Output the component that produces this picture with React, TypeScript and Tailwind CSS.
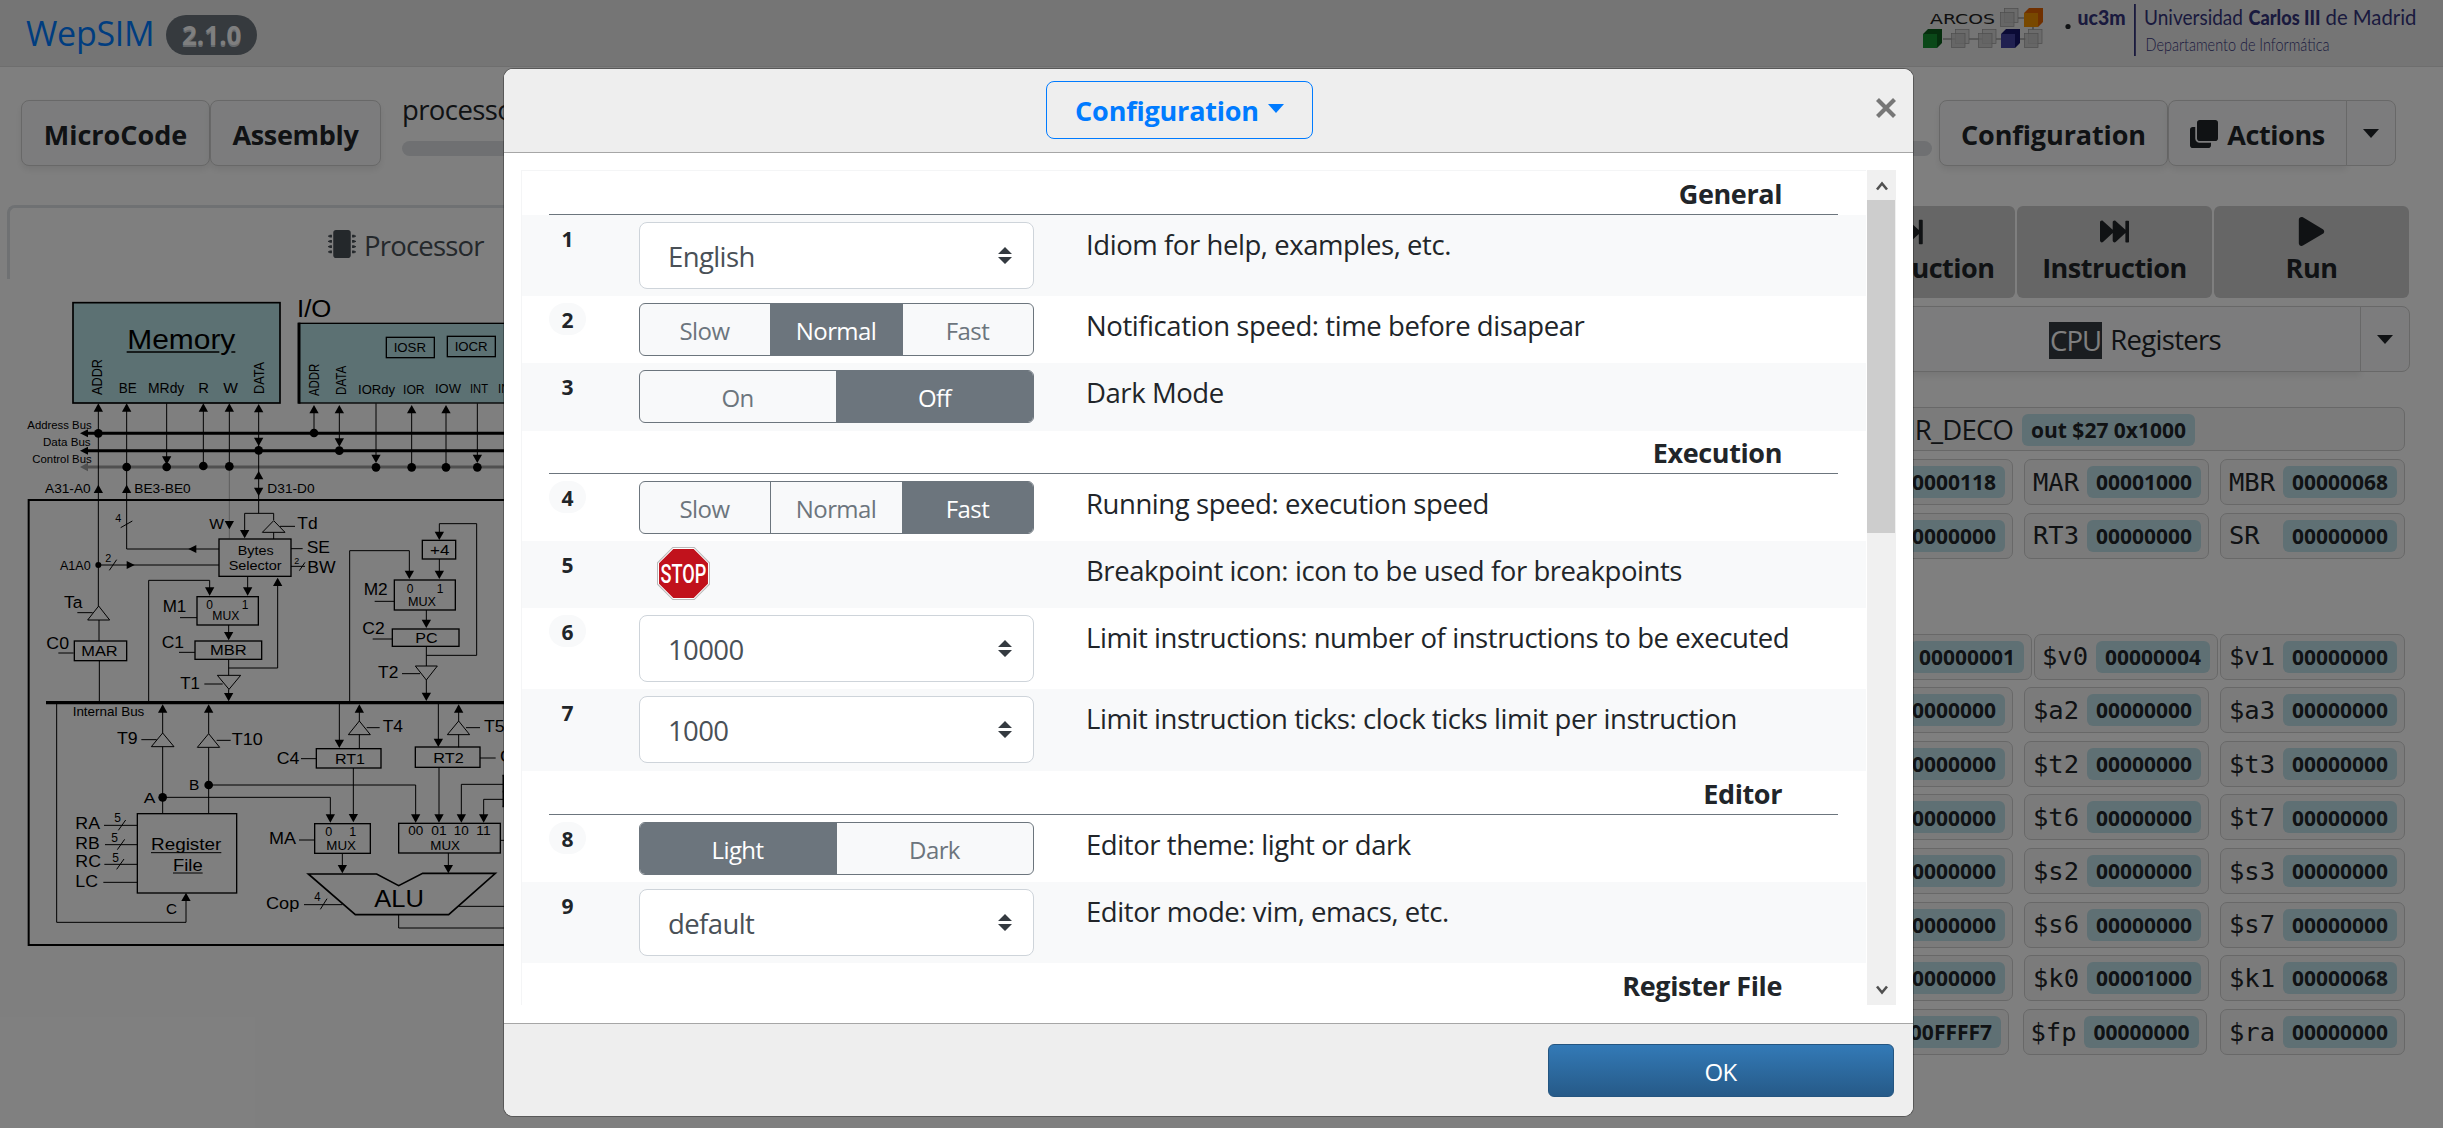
import React from 'react';
import { FaClone, FaFastForward, FaMicrochip, FaPlay, FaStepForward } from 'react-icons/fa';

/* ---------- Diagram primitives ---------- */

type Dir = 'u' | 'd' | 'l' | 'r';

function Arrow({ x, y, d }: { x: number; y: number; d: Dir }) {
  const pts = {
    u: `${x},${y} ${x - 14},${y + 25} ${x + 14},${y + 25}`,
    d: `${x},${y} ${x - 14},${y - 25} ${x + 14},${y - 25}`,
    l: `${x},${y} ${x + 24},${y - 12} ${x + 24},${y + 12}`,
    r: `${x},${y} ${x - 24},${y - 12} ${x - 24},${y + 12}`,
  }[d];
  return <polygon points={pts} fill="#000" stroke="none" />;
}

function Label({ x, to, y, s = 44, children }: { x: number; to: number; y: number; s?: number; children: string }) {
  return (
    <text x={x} y={y} fontSize={s} textLength={to - x} lengthAdjust="spacingAndGlyphs" fill="#000" stroke="none">
      {children}
    </text>
  );
}

function Upright({ x, y, len, children }: { x: number; y: number; len: number; children: string }) {
  return (
    <text transform={`translate(${x} ${y}) rotate(-90)`} fontSize="46" textLength={len} lengthAdjust="spacingAndGlyphs" fill="#000" stroke="none">
      {children}
    </text>
  );
}

const Dot = ({ x, y, r = 13 }: { x: number; y: number; r?: number }) => <circle cx={x} cy={y} r={r} fill="#000" stroke="none" />;

const Box = ({ x, y, x2, y2, fill = 'none', w = 4 }: { x: number; y: number; x2: number; y2: number; fill?: string; w?: number }) => (
  <rect x={x} y={y} width={x2 - x} height={y2 - y} fill={fill} strokeWidth={w} />
);

function MemoryAndBuses() {
  return (
    <g>
      <Box x={219} y={38} x2={840} y2={339} fill="#b9e2e7" w={5} />
      <Label x={382} to={706} y={178} s={84}>Memory</Label>
      <path d="M380 186H658M694 186H706" strokeWidth="4" />
      <Upright x={306} y={315} len={108}>ADDR</Upright>
      <Label x={356} to={410} y={310} s={42}>BE</Label>
      <Label x={444} to={553} y={310} s={42}>MRdy</Label>
      <Label x={595} to={627} y={310} s={42}>R</Label>
      <Label x={670} to={714} y={310} s={42}>W</Label>
      <Upright x={792} y={312} len={96}>DATA</Upright>

      <path d="M255 430H1520M258 482H1520" strokeWidth="9" />
      <path d="M258 531H1520" stroke="#a0a0a0" strokeWidth="9" />
      <Arrow x={240} y={430} d="l" />
      <Arrow x={240} y={482} d="l" />
      <polygon points="240,531 264,518 264,544" fill="#a0a0a0" stroke="none" />
      <Label x={82} to={275} y={416} s={34}>Address Bus</Label>
      <Label x={129} to={272} y={468} s={34}>Data Bus</Label>
      <Label x={97} to={275} y={519} s={34}>Control Bus</Label>

      <path d="M295 350V948M380 350V777H657M500 340V510M610 350V528M688 350V528M776 350V670M734 740V670H821V690" />
      <path d="M688 530V745" strokeWidth="2" stroke="#999" />
      <Arrow x={295} y={340} d="u" />
      <Arrow x={380} y={340} d="u" />
      <Arrow x={500} y={524} d="d" />
      <Arrow x={610} y={340} d="u" />
      <Arrow x={688} y={340} d="u" />
      <Arrow x={776} y={342} d="u" />
      <Arrow x={776} y={468} d="d" />
      <Arrow x={776} y={543} d="u" />
      <Arrow x={776} y={618} d="d" />
      <Arrow x={295} y={584} d="u" />
      <Arrow x={380} y={584} d="u" />
      <Arrow x={688} y={718} d="d" />
      <Arrow x={734} y={745} d="d" />
      <Arrow x={565} y={777} d="l" />
      <Arrow x={404} y={825} d="r" />
      <Dot x={295} y={430} />
      <Dot x={380} y={531} />
      <Dot x={500} y={531} />
      <Dot x={610} y={528} />
      <Dot x={688} y={529} />
      <Dot x={776} y={481} />
      <Dot x={295} y={825} r={9} />
      <Label x={135} to={272} y={609} s={39}>A31-A0</Label>
      <Label x={403} to={572} y={609} s={39}>BE3-BE0</Label>
      <path d="M1520 630H86V1965H1520" strokeWidth="6" />
      <Label x={346} to={364} y={696} s={35}>4</Label>
      <path d="M362 713L397 693M328 841L350 809M295 825H657" />
      <Label x={180} to={272} y={839} s={41}>A1A0</Label>
      <Label x={316} to={334} y={815} s={35}>2</Label>
      <Label x={628} to={672} y={718} s={42}>W</Label>
      <Box x={657} y={747} x2={873} y2={859} />
      <Label x={713} to={821} y={795} s={41}>Bytes</Label>
      <Label x={686} to={845} y={840} s={41}>Selector</Label>

      <path d="M446 1238V871H629V900M743 859V900M833 875V1134H686" />
      <Arrow x={629} y={917} d="d" />
      <Arrow x={743} y={917} d="d" />
      <Arrow x={833} y={863} d="u" />
      <Box x={591} y={920} x2={775} y2={1005} />
      <Label x={619} to={639} y={957} s={38}>0</Label>
      <Label x={725} to={745} y={957} s={38}>1</Label>
      <Label x={637} to={718} y={991} s={38}>MUX</Label>
      <Label x={488} to={559} y={966} s={50}>M1</Label>
      <Label x={192} to={247} y={953} s={50}>Ta</Label>
      <path d="M232 968H278M540 983H591" />
      <path d="M296 948L263 990H329Z" />
    </g>
  );
}

function RegisterSide() {
  return (
    <g transform="translate(0 960)">
      <path d="M297 30V93M298 152V274M175 129H221M537 127H585M686 45V75M686 148V196M686 238V262M613 222H668" />
      <Box x={223} y={93} x2={380} y2={152} />
      <Label x={244} to={353} y={138}>MAR</Label>
      <Label x={139} to={207} y={118} s={50}>C0</Label>
      <Box x={585} y={93} x2={785} y2={148} />
      <Label x={630} to={740} y={136}>MBR</Label>
      <Label x={485} to={552} y={115} s={50}>C1</Label>
      <Label x={541} to={600} y={237} s={50}>T1</Label>
      <Arrow x={686} y={91} d="d" />
      <path d="M652 196H722L687 238Z" />
      <Arrow x={686} y={274} d="d" />
      <path d="M138 278H1520" strokeWidth="10" />
      <Label x={218} to={433} y={318} s={39}>Internal Bus</Label>

      <path d="M170 280V937H558V865M424 389H470M650 391H692M488 300V369M626 300V371M488 410V612M626 412V612" />
      <path d="M626 525H1247V620M488 562H991V620" />
      <path d="M488 369L454 410H522ZM626 371L592 412H659Z" />
      <Arrow x={488} y={283} d="u" />
      <Arrow x={626} y={283} d="u" />
      <Arrow x={558} y={848} d="u" />
      <Arrow x={1247} y={638} d="d" />
      <Arrow x={991} y={638} d="d" />
      <Dot x={488} y={562} />
      <Dot x={626} y={525} />
      <Label x={351} to={413} y={403} s={50}>T9</Label>
      <Label x={695} to={788} y={405} s={50}>T10</Label>
      <Label x={567} to={598} y={540} s={46}>B</Label>
      <Label x={431} to={466} y={579} s={46}>A</Label>
      <Label x={498} to={531} y={911} s={46}>C</Label>

      <Box x={412} y={611} x2={710} y2={849} />
      <Label x={453} to={664} y={721} s={51}>Register</Label>
      <Label x={519} to={608} y={783} s={51}>File</Label>
      <path d="M453 728H664M519 789H608" />
      <Label x={226} to={300} y={657} s={51}>RA</Label>
      <Label x={226} to={299} y={717} s={51}>RB</Label>
      <Label x={226} to={303} y={771} s={51}>RC</Label>
      <Label x={226} to={294} y={832} s={51}>LC</Label>
      <Label x={343} to={363} y={637} s={37}>5</Label>
      <Label x={334} to={354} y={697} s={37}>5</Label>
      <Label x={337} to={357} y={757} s={37}>5</Label>
      <path d="M312 646H412M315 704H412M313 763H412M310 817H412M355 661L377 630M352 719L374 688M350 778L372 747" />
    </g>
  );
}

function InputOutput() {
  return (
    <g transform="translate(750 0)">
      <Label x={141} to={244} y={81} s={74}>I/O</Label>
      <Box x={147} y={100} x2={1000} y2={339} fill="#b9e2e7" />
      <path d="M147 98V341" strokeWidth="9" />
      <Box x={409} y={142} x2={553} y2={203} />
      <Label x={431} to={528} y={186} s={39}>IOSR</Label>
      <Box x={592} y={139} x2={736} y2={200} />
      <Label x={614} to={713} y={184} s={39}>IOCR</Label>
      <Upright x={208} y={318} len={97}>ADDR</Upright>
      <Upright x={288} y={315} len={88}>DATA</Upright>
      <Label x={324} to={435} y={311} s={41}>IORdy</Label>
      <Label x={459} to={524} y={312} s={41}>IOR</Label>
      <Label x={555} to={633} y={310} s={41}>IOW</Label>
      <Label x={660} to={714} y={310} s={41}>INT</Label>
      <Label x={744} to={820} y={310} s={41}>INTA</Label>
      <path d="M192 360V429M268 360V460M378 340V505M485 360V532M588 360V532M682 340V505" />
      <Arrow x={192} y={345} d="u" />
      <Arrow x={268} y={345} d="u" />
      <Arrow x={268} y={470} d="d" />
      <Arrow x={378} y={519} d="d" />
      <Arrow x={485} y={345} d="u" />
      <Arrow x={588} y={345} d="u" />
      <Arrow x={682} y={519} d="d" />
      <Dot x={192} y={429} />
      <Dot x={268} y={482} />
      <Dot x={378} y={532} />
      <Dot x={485} y={532} />
      <Dot x={588} y={532} />
      <Dot x={682} y={532} />
      <Label x={52} to={194} y={610} s={41}>D31-D0</Label>
      <Label x={142} to={203} y={717} s={49}>Td</Label>
      <Label x={170} to={240} y={789} s={49}>SE</Label>
      <Label x={172} to={257} y={848} s={49}>BW</Label>
      <Label x={133} to={148} y={822} s={27}>2</Label>
      <path d="M71 692L37 727H105ZM90 709H135M71 727V747M123 776H158M123 829H165M148 842L165 817" />

      <Box x={517} y={751} x2={617} y2={807} />
      <Label x={540} to={598} y={794}>+4</Label>
      <path d="M568 735V701H680V1096H529M568 807V850M299 1238V782H478V850M374 934H433" />
      <Arrow x={568} y={750} d="d" />
      <Arrow x={568} y={867} d="d" />
      <Arrow x={478} y={867} d="d" />
      <Box x={433} y={870} x2={616} y2={960} />
      <Label x={470} to={490} y={910} s={39}>0</Label>
      <Label x={560} to={580} y={910} s={39}>1</Label>
      <Label x={474} to={558} y={949} s={39}>MUX</Label>
      <Label x={341} to={413} y={914} s={50}>M2</Label>
    </g>
  );
}

function AluSide() {
  return (
    <g transform="translate(750 960)">
      <path d="M529 0V40M529 109V168M529 210V255M368 87H427M456 191H510" />
      <Arrow x={529} y={54} d="d" />
      <Arrow x={529} y={273} d="d" />
      <Box x={427} y={57} x2={627} y2={109} />
      <Label x={496} to={563} y={99}>PC</Label>
      <Label x={337} to={404} y={73} s={50}>C2</Label>
      <path d="M496 168H562L529 210Z" />
      <Label x={384} to={445} y={205} s={50}>T2</Label>

      <path d="M268 280V400M328 300V333M328 374V416M350 353H389M153 446H199M565 280V400M626 300V333M626 374V412M648 353H690M690 444H737" />
      <path d="M328 333L295 374H361ZM626 333L592 374H659Z" />
      <Arrow x={268} y={414} d="d" />
      <Arrow x={328} y={283} d="u" />
      <Arrow x={565} y={411} d="d" />
      <Arrow x={626} y={283} d="u" />
      <Box x={199} y={416} x2={393} y2={474} />
      <Label x={255} to={345} y={462} s={46}>RT1</Label>
      <Label x={80} to={148} y={462} s={50}>C4</Label>
      <Label x={398} to={459} y={367} s={50}>T4</Label>
      <Box x={496} y={411} x2={690} y2={472} />
      <Label x={550} to={641} y={458} s={46}>RT2</Label>
      <Label x={702} to={764} y={367} s={50}>T5</Label>
      <Label x={750} to={818} y={456} s={50}>C5</Label>

      <path d="M310 474V620M567 472V620M634 620V523H800M701 620V568H800" />
      <path d="M760 496V590M757 497H800M757 545H800M757 589H800" strokeWidth="5" />
      <Arrow x={310} y={637} d="d" />
      <Arrow x={567} y={638} d="d" />
      <Arrow x={634} y={638} d="d" />
      <Arrow x={701} y={638} d="d" />

      <Box x={194} y={641} x2={361} y2={730} />
      <Label x={226} to={247} y={678} s={40}>0</Label>
      <Label x={298} to={319} y={678} s={40}>1</Label>
      <Label x={229} to={318} y={720} s={40}>MUX</Label>
      <Label x={57} to={138} y={703} s={49}>MA</Label>
      <Box x={446} y={640} x2={751} y2={729} />
      <Label x={475} to={520} y={676} s={40}>00</Label>
      <Label x={544} to={590} y={676} s={40}>01</Label>
      <Label x={611} to={656} y={676} s={40}>10</Label>
      <Label x={679} to={722} y={676} s={40}>11</Label>
      <Label x={541} to={630} y={720} s={40}>MUX</Label>
      <path d="M147 690H194M751 691H800M277 730V775M595 729V775" />
      <Arrow x={277} y={790} d="d" />
      <Arrow x={595} y={790} d="d" />

      <path d="M175 792H380L446 827L518 790H736L596 914H316Z" strokeWidth="5" />
      <Label x={373} to={522} y={891} s={74}>ALU</Label>
      <Label x={48} to={148} y={898} s={49}>Cop</Label>
      <Label x={193} to={212} y={873} s={37}>4</Label>
      <path d="M162 884H277M211 898L231 866M626 889H800M446 914V954H800" />
    </g>
  );
}

function ProcessorDiagram() {
  return (
    <svg
      viewBox="0 0 1680 2100"
      className="block h-[700px] w-[560px] font-['Liberation_Sans',sans-serif]"
      fill="none"
      stroke="#000"
      strokeWidth="3"
    >
      <MemoryAndBuses />
      <InputOutput />
      <RegisterSide />
      <AluSide />
    </svg>
  );
}

/* ---------- Header ---------- */

function Cube({ x, y, front, back }: { x: number; y: number; front: string; back: string }) {
  return (
    <g>
      <path d={`M${x} ${y + 5}L${x + 5} ${y}H${x + 19}V${y + 14}L${x + 14} ${y + 19}V${y + 5}Z`} fill={back} />
      <rect x={x} y={y + 5} width="14" height="14" fill={front} />
    </g>
  );
}

function GhostCube({ x, y }: { x: number; y: number }) {
  return (
    <g fill="#d6d6d6" stroke="#9a9a9a" strokeWidth="0.7">
      <rect x={x + 4.5} y={y + 0.5} width="13.5" height="14" />
      <rect x={x + 0.5} y={y + 4.5} width="13.5" height="14" fill="#c4c4c4" fillOpacity=".8" />
    </g>
  );
}

function Logos() {
  return (
    <svg viewBox="1915 0 528 66" className="block h-[66px] w-[528px]">
      <text x="1930" y="24" fontSize="14" textLength="65" lengthAdjust="spacingAndGlyphs" fill="#222" className="font-['DejaVu_Sans']">ARCOS</text>
      <path d="M1943 39H2026M2017 18H2026M2033 27V33" stroke="#777" strokeWidth="1.2" />
      <Cube x={1923} y={29} front="#149030" back="#0a5c1a" />
      <GhostCube x={1951} y={29} />
      <GhostCube x={1978} y={29} />
      <Cube x={2001} y={29} front="#4040a0" back="#15156a" />
      <GhostCube x={2024} y={29} />
      <GhostCube x={2000} y={8} />
      <Cube x={2024} y={8} front="#f09000" back="#e06000" />
      <circle cx="2068" cy="26.5" r="2.6" fill="#212529" />
      <g fill="#34347c" className="font-['Lato']">
        <text x="2077.5" y="24.6" fontSize="20.5" fontWeight="900" textLength="48" lengthAdjust="spacingAndGlyphs">uc3m</text>
        <rect x="2134" y="4" width="1.8" height="52" />
        <text x="2144" y="24.6" fontSize="20.5" textLength="99" lengthAdjust="spacingAndGlyphs">Universidad</text>
        <text x="2248.5" y="24.6" fontSize="20.5" fontWeight="900" textLength="72" lengthAdjust="spacingAndGlyphs">Carlos III</text>
        <text x="2325.5" y="24.6" fontSize="20.5" textLength="91" lengthAdjust="spacingAndGlyphs">de Madrid</text>
        <text x="2145.5" y="50.7" fontSize="17.5" fontWeight="300" textLength="184" lengthAdjust="spacingAndGlyphs">Departamento de Informática</text>
      </g>
    </svg>
  );
}

function Header() {
  return (
    <header className="flex h-[67px] items-center border-b border-[#dcdcdc] bg-[#ebebeb] pl-[26px]">
      <span className="text-[34px] tracking-[-0.3px] text-[#007bff]">WepSIM</span>
      <span className="ml-[12px] mt-[3px] flex h-[40px] w-[91px] items-center justify-center rounded-full bg-[#6c757d] pt-[2px] text-[26px] font-bold text-white [text-shadow:0_2px_0_#ced4da]">
        2.1.0
      </span>
      <div className="ml-auto self-start">
        <Logos />
      </div>
    </header>
  );
}

/* ---------- Background page ---------- */

const Caret = () => (
  <span className="block h-0 w-0 border-x-8 border-t-[9px] border-x-transparent border-t-current" />
);

const toolButton =
  'flex h-[66px] items-center justify-center border border-[#d0d0d0] bg-[#f8f9fa] pt-[5px] text-[27px] font-bold shadow-[0_4px_7px_rgba(0,0,0,.08)]';

function Toolbar() {
  return (
    <div className="flex h-[138px] items-start pl-[21px] pr-[47px] pt-[33px]">
      <button className={`${toolButton} w-[189px] rounded-lg`}>MicroCode</button>
      <button className={`${toolButton} w-[171px] rounded-lg tracking-[-0.3px]`}>Assembly</button>
      <div className="ml-[21px] mr-[7px] flex flex-1 flex-col">
        <span className="-mt-[11px] h-[42px] text-[27.5px] leading-[42px] tracking-[-0.6px]">processor</span>
        <div className="mt-[10px] h-[15px] rounded-lg bg-[#dee1e4]" />
      </div>
      <button className={`${toolButton} w-[229px] rounded-lg tracking-[-0.1px]`}>Configuration</button>
      <div className="flex">
        <button className={`${toolButton} w-[179px] gap-[9px] rounded-l-lg tracking-[-0.4px]`}>
          <FaClone className="-mt-[3px] text-[28px]" />
          Actions
        </button>
        <button className="-ml-px flex h-[66px] w-[50px] items-center justify-center rounded-r-lg border border-[#d0d0d0] bg-[#f8f9fa]">
          <Caret />
        </button>
      </div>
    </div>
  );
}

function RunButton({ icon, children, className = 'w-[195px]' }: { icon: React.ReactNode; children: string; className?: string }) {
  return (
    <button className={`flex h-[92px] flex-col items-center rounded-md bg-[#cccccc] pt-[11px] text-[27px] font-bold tracking-[-0.5px] ${className}`}>
      <span className="flex h-[29px] items-center">{icon}</span>
      <span className="mt-px h-[42px] leading-[42px]">{children}</span>
    </button>
  );
}

function Value({ children }: { children: string }) {
  return (
    <span className="flex h-[32px] items-center justify-center rounded-md bg-[#bfe0e8] px-[9px] pt-[2px] text-[21px] font-bold">
      {children}
    </span>
  );
}

function Cell({ name, value, className = 'w-[185px]' }: { name: string; value: string; className?: string }) {
  return (
    <div className={`flex h-[46px] items-center justify-end rounded-[7px] border border-[#d0d0d0] bg-[#f7f7f7] pr-[7px] ${className}`}>
      <span className="w-[54px] whitespace-pre font-['DejaVu_Sans_Mono',monospace] text-[25.5px]">{name}</span>
      <Value>{value}</Value>
    </div>
  );
}

const Z = '00000000';

const cpuRows: [string, string][][] = [
  [['PC ', '00000118'], ['MAR', '00001000'], ['MBR', '00000068']],
  [['RT2', Z], ['RT3', Z], ['SR ', Z]],
];

const fileRows: [string, string][][] = [
  [['$a1', Z], ['$a2', Z], ['$a3', Z]],
  [['$t1', Z], ['$t2', Z], ['$t3', Z]],
  [['$t5', Z], ['$t6', Z], ['$t7', Z]],
  [['$s1', Z], ['$s2', Z], ['$s3', Z]],
  [['$s5', Z], ['$s6', Z], ['$s7', Z]],
  [['$t9', Z], ['$k0', '00001000'], ['$k1', '00000068']],
];

function RegisterRow({ cells }: { cells: [string, string][] }) {
  return (
    <div className="flex justify-end gap-[11px]">
      {cells.map(([n, v]) => (
        <Cell key={n} name={n} value={v} />
      ))}
    </div>
  );
}

function RegistersPanel() {
  return (
    <div className="flex flex-1 flex-col pt-[1px]">
      <div className="flex justify-end gap-[2px] pr-[34px]">
        <RunButton className="w-[203px]" icon={<FaStepForward className="text-[28px]" />}>µInstruction</RunButton>
        <RunButton icon={<FaFastForward className="text-[29px]" />}>Instruction</RunButton>
        <RunButton icon={<FaPlay className="text-[29px]" />}>Run</RunButton>
      </div>
      <div className="mt-[8px] flex justify-end pr-[33px]">
        <button className="flex h-[66px] w-[450px] items-center justify-center border border-[#d0d0d0] bg-[#f8f9fa] pr-[2px] pt-[2px] text-[27.5px] tracking-[-0.7px] shadow-[0_4px_7px_rgba(0,0,0,.08)]">
          <span className="mr-[8px] bg-[#343a40] px-px leading-[37px] tracking-[-0.9px] text-white">CPU</span>
          Registers
        </button>
        <button className="-ml-px flex h-[66px] w-[50px] items-center justify-center rounded-r-lg border border-[#d0d0d0] bg-[#f8f9fa]">
          <Caret />
        </button>
      </div>

      <div className="mt-[35px] flex flex-col gap-[7.8px] pr-[38px]">
        <div className="flex h-[44px] w-[600px] items-center gap-[9px] self-end rounded-[7px] border border-[#d0d0d0] bg-[#f7f7f7] pl-[101px] pt-px text-[27.5px]">
          <span className="w-[106px] text-right tracking-[-0.8px]">IR_DECO</span>
          <Value>out $27 0x1000</Value>
        </div>
        {cpuRows.map((r) => (
          <RegisterRow key={r[0][0]} cells={r} />
        ))}
      </div>
      <div className="mt-[75px] flex flex-col gap-[7.6px] pr-[38px]">
        <div className="flex justify-end gap-[2px]">
          <Cell name="$at" value="00000001" />
          <Cell name="$v0" value="00000004" className="w-[184px]" />
          <Cell name="$v1" value={Z} />
        </div>
        {fileRows.map((r) => (
          <RegisterRow key={r[0][0]} cells={r} />
        ))}
        <div className="flex justify-end gap-[13.5px]">
          <Cell name="$sp" value="000FFFF7" className="w-[182px]" />
          <Cell name="$fp" value={Z} className="w-[184px]" />
          <Cell name="$ra" value={Z} />
        </div>
      </div>
    </div>
  );
}

function ProcessorPanel() {
  return (
    <div className="w-[1200px] pl-[7px]">
      <div className="flex h-[74px] items-center gap-[8px] rounded-tl-lg border-l-[3px] border-t-[3px] border-[#dee2e6] pl-[318px] pt-[5px] text-[27.5px] tracking-[-0.8px] text-[#495057]">
        <FaMicrochip className="mt-[-4px] text-[28px]" />
        Processor
      </div>
      <div className="-ml-[7px] pt-[11px]">
        <ProcessorDiagram />
      </div>
    </div>
  );
}

/* ---------- Configuration dialog ---------- */

function Segments({ options, active, widths }: { options: string[]; active: number; widths: string }) {
  return (
    <div className={`grid h-[53px] overflow-hidden rounded-[6px] border border-[#6c757d] bg-[#f8f9fa] text-[24px] tracking-[-0.6px] text-[#6c757d] ${widths}`}>
      {options.map((o, i) => (
        <button
          key={o}
          className={`flex items-center justify-center pr-px pt-[2px] ${i > 0 ? 'border-l border-[#6c757d]' : ''} ${i === active ? 'bg-[#6c757d] text-white' : ''}`}
        >
          {o}
        </button>
      ))}
    </div>
  );
}

const three = 'grid-cols-[130px_132px_1fr]';
const two = 'grid-cols-[196px_1fr]';

function Select({ value }: { value: string }) {
  return (
    <div className="flex h-[67px] items-center justify-between rounded-[8px] border border-[#ced4da] bg-white pl-[28px] pr-[21px] pt-[2px] text-[27.5px] tracking-[-0.6px] text-[#495057]">
      {value}
      <svg viewBox="0 0 14 17" className="-mt-[2px] h-[17px] w-[14px]" fill="#343a40">
        <path d="M7 0L14 7H0Z M7 17L14 10H0Z" />
      </svg>
    </div>
  );
}

function StopSign() {
  return (
    <svg viewBox="0 0 52 52" className="-mt-px ml-[18px] block h-[53px] w-[53px] overflow-visible">
      <path d="M15.5 .5H36.5L51.5 15.5V36.5L36.5 51.5H15.5L.5 36.5V15.5Z" fill="#fff" stroke="#b9b9b9" strokeWidth="1" />
      <path d="M16 2H36L50 16V36L36 50H16L2 36V16Z" fill="#c1121c" />
      <text x="3.5" y="35" fontSize="25.5" fontWeight="500" fill="#fff" textLength="45" lengthAdjust="spacingAndGlyphs" className="font-['Roboto']">STOP</text>
    </svg>
  );
}

function Row({ n, text, children, className = 'h-[67px]' }: { n: number; text: string; children: React.ReactNode; className?: string }) {
  return (
    <div className={`flex items-start pl-[27px] pt-[7px] ${n % 2 ? 'bg-[#f8f9fa]' : 'bg-white'} ${className}`}>
      <span className="flex h-[32px] w-[37px] items-center justify-center rounded-full bg-[#f8f9fa] pt-[3px] text-[21px] font-bold">{n}</span>
      <div className="ml-[53px] w-[395px]">{children}</div>
      <span className="ml-[52px] mt-[2px] whitespace-nowrap text-[27.5px] leading-[42px] tracking-[-0.43px]">{text}</span>
    </div>
  );
}

function Section({ title, className = 'h-[44px]' }: { title: string; className?: string }) {
  return (
    <div className={`ml-[27px] mr-[28px] flex items-end justify-end border-b border-[#6c757d] pr-[56px] text-[27px] font-bold leading-[40px] tracking-[-0.4px] ${className}`}>
      {title}
    </div>
  );
}

function Scrollbar() {
  return (
    <div className="ml-px flex w-[29px] flex-col bg-[#f0f0f0]">
      <div className="flex h-[30px] items-center justify-center pt-[2px]">
        <svg viewBox="0 0 12 10" className="h-[10px] w-[12px]" fill="none" stroke="#505050" strokeWidth="2.6">
          <path d="M1 8.5L6 2.5L11 8.5" />
        </svg>
      </div>
      <div className="mr-px h-[333px] bg-[#cdcdcd]" />
      <div className="mt-auto flex h-[30px] items-center justify-center">
        <svg viewBox="0 0 12 10" className="h-[10px] w-[12px]" fill="none" stroke="#505050" strokeWidth="2.6">
          <path d="M1 1.5L6 7.5L11 1.5" />
        </svg>
      </div>
    </div>
  );
}

function Dialog() {
  return (
    <div className="absolute left-[504px] top-[69px] flex h-[1047px] w-[1409px] flex-col overflow-hidden rounded-[9px] bg-white shadow-[0_0_0_1px_rgba(0,0,0,.3)]">
      <div className="relative flex h-[84px] shrink-0 items-start justify-center border-b border-[#a6a6a6] bg-[#eeeeee] pr-[58px] pt-[12px]">
        <button className="flex h-[58px] w-[267px] items-center justify-center gap-[9px] rounded-[8px] border border-[#007bff] pt-[3px] text-[27px] font-bold tracking-[-0.2px] text-[#007bff]">
          Configuration
          <span className="-mt-[6px]">
            <Caret />
          </span>
        </button>
        <svg viewBox="0 0 20 20" className="absolute right-[17px] top-[29px] h-[20px] w-[20px]" stroke="#777" strokeWidth="4.2">
          <path d="M1.5 1.5L18.5 18.5M18.5 1.5L1.5 18.5" />
        </svg>
      </div>

      <div className="flex min-h-0 flex-1 px-[17px] pb-[18px] pt-[17px]">
        <div className="flex-1 overflow-hidden border-l border-t border-[#f4f5f6]">
          <Section title="General" />
          <Row n={1} text="Idiom for help, examples, etc." className="h-[81px]">
            <Select value="English" />
          </Row>
          <Row n={2} text="Notification speed: time before disapear">
            <Segments options={['Slow', 'Normal', 'Fast']} active={1} widths={three} />
          </Row>
          <Row n={3} text="Dark Mode" className="h-[68px]">
            <Segments options={['On', 'Off']} active={1} widths={two} />
          </Row>
          <Section title="Execution" className="h-[43px]" />
          <Row n={4} text="Running speed: execution speed">
            <Segments options={['Slow', 'Normal', 'Fast']} active={2} widths={three} />
          </Row>
          <Row n={5} text="Breakpoint icon: icon to be used for breakpoints">
            <StopSign />
          </Row>
          <Row n={6} text="Limit instructions: number of instructions to be executed" className="h-[81px]">
            <Select value="10000" />
          </Row>
          <Row n={7} text="Limit instruction ticks: clock ticks limit per instruction" className="h-[82px]">
            <Select value="1000" />
          </Row>
          <Section title="Editor" />
          <Row n={8} text="Editor theme: light or dark">
            <Segments options={['Light', 'Dark']} active={0} widths={two} />
          </Row>
          <Row n={9} text="Editor mode: vim, emacs, etc." className="h-[81px]">
            <Select value="default" />
          </Row>
          <Section title="Register File" />
        </div>
        <Scrollbar />
      </div>

      <div className="flex h-[93px] shrink-0 items-start justify-end border-t border-[#a6a6a6] bg-[#eeeeee] pr-[19px] pt-[20px]">
        <button className="flex h-[53px] w-[346px] items-center justify-center rounded-[6px] border border-[#245580] bg-linear-to-b from-[#337ab7] to-[#265a88] pr-px pt-[2px] text-[24px] tracking-[-0.6px] text-white">
          OK
        </button>
      </div>
    </div>
  );
}

export default function App() {
  return (
    <div className="relative h-[1128px] w-[2443px] overflow-hidden bg-white font-['Open_Sans',sans-serif] text-[#212529]">
      <Header />
      <Toolbar />
      <main className="flex">
        <ProcessorPanel />
        <RegistersPanel />
      </main>
      <div className="absolute inset-0 bg-black/50" />
      <Dialog />
    </div>
  );
}
